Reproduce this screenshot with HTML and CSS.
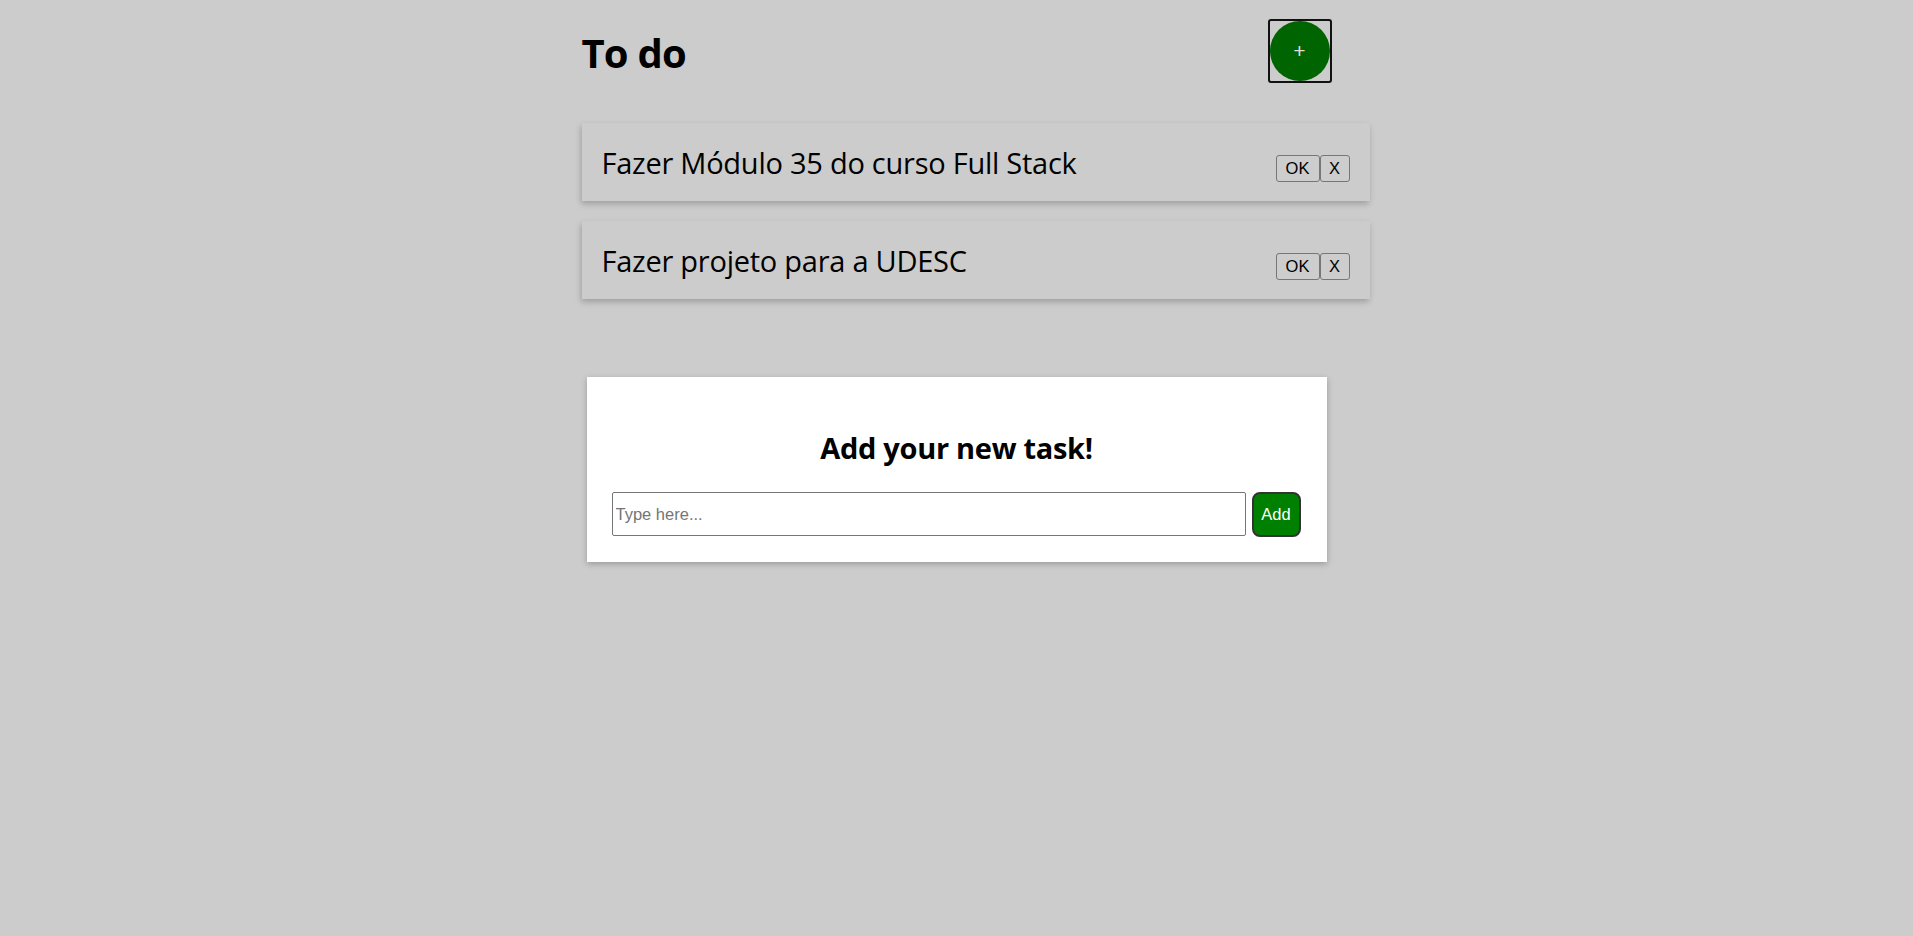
FILE: index.html
```html
<!DOCTYPE html>
<html lang="pt">
<head>
<meta charset="utf-8">
<title>To do</title>
<link rel="stylesheet" href="styles.css">
</head>
<body>
<main class="wrapper">
  <header class="header">
    <h1 class="title">To do</h1>
    <button class="fab" type="button"><span class="fab-circle">+</span></button>
  </header>
  <ul class="list">
    <li class="card">
      <p class="card-text">Fazer Módulo 35 do curso Full Stack</p>
      <div class="actions">
        <button class="btn btn-ok" type="button">OK</button><button class="btn btn-x" type="button">X</button>
      </div>
    </li>
    <li class="card">
      <p class="card-text">Fazer projeto para a UDESC</p>
      <div class="actions">
        <button class="btn btn-ok" type="button">OK</button><button class="btn btn-x" type="button">X</button>
      </div>
    </li>
  </ul>
</main>
<section class="modal">
  <h2 class="modal-title">Add your new task!</h2>
  <form class="modal-form">
    <input class="modal-input" type="text" placeholder="Type here...">
    <button class="modal-add" type="button">Add</button>
  </form>
</section>
</body>
</html>
```
FILE: styles.css
```css
* { box-sizing: border-box; }
html, body { margin: 0; padding: 0; }
body {
  background: #cccccc;
  font-family: "Open Sans", "Noto Sans", sans-serif;
  color: #000;
  min-height: 936px;
}
.wrapper {
  width: 750px;
  margin: 0 auto;
}
.header {
  display: flex;
  justify-content: space-between;
  align-items: center;
  margin-top: 19px;
  height: 64px;
}
.title {
  margin: 3px 0 0 0;
  font-size: 40px;
  font-weight: 700;
  letter-spacing: -0.8px;
}
.fab {
  width: 64px;
  height: 64px;
  padding: 0;
  border: 2px solid #111;
  border-radius: 3px;
  background: #cccccc;
  display: flex;
  align-items: center;
  justify-content: center;
  cursor: pointer;
}
.fab-circle {
  width: 60px;
  height: 60px;
  border-radius: 50%;
  background: #006400;
  color: #dcdcdc;
  font-family: "Liberation Sans", Arial, sans-serif;
  font-size: 21px;
  display: flex;
  align-items: center;
  justify-content: center;
}
.list {
  list-style: none;
  margin: 40px 0 0 0;
  padding: 0;
  display: flex;
  flex-direction: column;
  gap: 20px;
}
.card {
  width: 788px;
  height: 78px;
  padding: 0 20px;
  background: #cccccc;
  box-shadow: -1px 3px 6px rgba(0, 0, 0, 0.22);
  display: flex;
  justify-content: space-between;
  align-items: center;
}
.card-text {
  margin: 0;
  font-size: 29px;
  letter-spacing: -0.25px;
}
.actions {
  display: flex;
  margin-top: 13px;
}
.btn {
  height: 27px;
  padding: 0;
  background: #cdcdcd;
  border: 1px solid #767676;
  border-radius: 3px;
  font-family: "Liberation Sans", Arial, sans-serif;
  font-size: 16.5px;
  color: #000;
  cursor: pointer;
}
.btn-ok { width: 44px; }
.btn-x { width: 30px; }
.modal {
  width: 740px;
  margin: 78px auto 0;
  padding: 51px 25px 25px;
  background: #ffffff;
  box-shadow: 0 2px 6px rgba(0, 0, 0, 0.25);
}
.modal-title {
  margin: 0;
  text-align: center;
  font-size: 29px;
  font-weight: 700;
  letter-spacing: -0.3px;
}
.modal-form {
  display: flex;
  gap: 6px;
  margin-top: 25px;
}
.modal-input {
  width: 634px;
  height: 44px;
  border: 1px solid #767676;
  border-radius: 2px;
  padding: 0 3px;
  font-family: "Liberation Sans", Arial, sans-serif;
  font-size: 16.5px;
  background: #fff;
}
.modal-input::placeholder { color: #757575; }
.modal-add {
  width: 49px;
  height: 45px;
  padding: 0;
  background: #008000;
  color: #fff;
  border: 2px solid #333;
  border-radius: 8px;
  font-family: "Liberation Sans", Arial, sans-serif;
  font-size: 16.5px;
  cursor: pointer;
}
```
